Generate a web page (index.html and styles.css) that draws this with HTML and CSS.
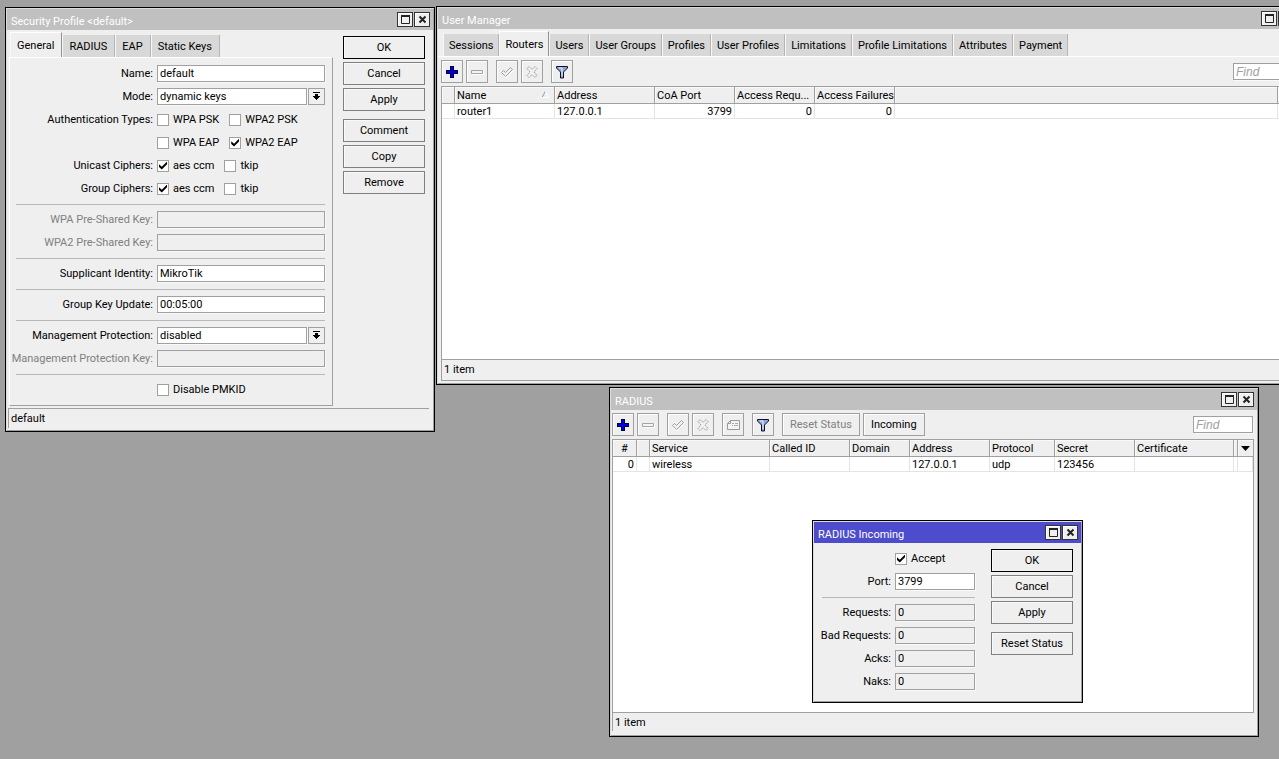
FILE: index.html
```html
<!DOCTYPE html>
<html lang="en">
<head>
<meta charset="utf-8">
<title>WinBox</title>
<link rel="stylesheet" href="styles.css">
</head>
<body>
<svg class="defs" aria-hidden="true">
  <symbol id="i-max" viewBox="0 0 11 11"><path d="M1 1.500h9M1.500 3V9.500H9.500V1" fill="none" stroke="#222"/><path d="M1 1h9v2H1z" fill="#222"/></symbol>
  <symbol id="i-close" viewBox="0 0 11 11"><path d="M2.500 2.500l6 6M8.500 2.500l-6 6" stroke="#222" stroke-width="2" fill="none"/></symbol>
  <symbol id="i-plus" viewBox="0 0 14 14"><path d="M5.500 1.500h3v4h4v3h-4v4h-3v-4h-4v-3h4z" fill="#0000e0" stroke="#000040" shape-rendering="crispEdges"/></symbol>
  <symbol id="i-minus" viewBox="0 0 14 14"><path d="M2 9.500h11.500v-4" stroke="#fff" fill="none"/><path d="M1.500 5.500h11v3h-11z" fill="#f4f4f4" stroke="#a4a4a4"/></symbol>
  <symbol id="i-check" viewBox="0 0 14 14"><path d="M2 9l4 4 8-8" stroke="#fff" fill="none"/><path d="M1.500 7.500l2-2 2 2 5-5 2 2-7 7z" fill="#f2f2f2" stroke="#a0a0a0"/></symbol>
  <symbol id="i-cross" viewBox="0 0 14 14"><path d="M2 3.500l2-2 3 3 3-3 2 2-3 3.500 3 3.500-2 2-3-3-3 3-2-2 3-3.500z" fill="#f2f2f2" stroke="#a0a0a0" stroke-dasharray="2 .6"/></symbol>
  <symbol id="i-card" viewBox="0 0 14 14"><path d="M1.500 5.500l3-3h9v9h-12zM1.500 5.500h3v-3" fill="#f4f4f4" stroke="#999"/><path d="M6 5.500h2M9 5.500h3M6 7.500h1M8 7.500h4" stroke="#aaa"/></symbol>
  <symbol id="i-funnel" viewBox="0 0 14 14"><path d="M1.500 1.500h11v1.500l-4 4v6h-3v-6l-4-4z" fill="#8ea6dc" stroke="#101020"/><path d="M4 3h3v8" stroke="#eef3ff" fill="none"/></symbol>
  <symbol id="i-drop" viewBox="0 0 9 9"><path d="M1 0h7v1H1zM3 2h3v2h2v1H7v1H6v1H5v1H4V7H3V6H2V5H1V4h2z" shape-rendering="crispEdges"/></symbol>
</svg>
<main class="desktop">

<section class="window w-profile">
  <header class="title"><h2>Security Profile &lt;default&gt;</h2>
    <button class="cap" aria-label="Maximize"><svg><use href="#i-max"/></svg></button>
    <button class="cap" aria-label="Close"><svg><use href="#i-close"/></svg></button></header>
  <form class="split">
    <div class="tabbed">
      <nav class="tabs">
        <button type="button" class="tab active">General</button><button type="button" class="tab">RADIUS</button><button type="button" class="tab">EAP</button><button type="button" class="tab">Static Keys</button>
      </nav>
      <div class="panel fields">
        <label for="name">Name:</label><input class="box" id="name" value="default">
        <label for="mode">Mode:</label><div class="combo"><select class="box" id="mode"><option>dynamic keys</option></select><button type="button" class="drop" aria-label="Open mode list"><svg><use href="#i-drop"/></svg></button></div>
        <span class="lbl">Authentication Types:</span><div class="checks"><label><input type="checkbox">WPA PSK</label><label><input type="checkbox">WPA2 PSK</label></div>
        <div class="checks"><label><input type="checkbox">WPA EAP</label><label><input type="checkbox" checked>WPA2 EAP</label></div>
        <span class="lbl">Unicast Ciphers:</span><div class="checks"><label><input type="checkbox" checked>aes ccm</label><label><input type="checkbox">tkip</label></div>
        <span class="lbl">Group Ciphers:</span><div class="checks"><label><input type="checkbox" checked>aes ccm</label><label><input type="checkbox">tkip</label></div>
        <hr>
        <label class="off" for="wpa">WPA Pre-Shared Key:</label><input class="box" id="wpa" disabled>
        <label class="off" for="wpa2">WPA2 Pre-Shared Key:</label><input class="box" id="wpa2" disabled>
        <hr>
        <label for="sup">Supplicant Identity:</label><input class="box" id="sup" value="MikroTik">
        <hr>
        <label for="gku">Group Key Update:</label><input class="box" id="gku" value="00:05:00">
        <hr>
        <label for="mp">Management Protection:</label><div class="combo"><select class="box" id="mp"><option>disabled</option></select><button type="button" class="drop" aria-label="Open protection list"><svg><use href="#i-drop"/></svg></button></div>
        <label class="off" for="mpk">Management Protection Key:</label><input class="box" id="mpk" disabled>
        <hr>
        <div class="checks"><label><input type="checkbox">Disable PMKID</label></div>
      </div>
    </div>
    <div class="actions">
      <button type="button" class="btn primary">OK</button><button type="button" class="btn">Cancel</button><button type="button" class="btn">Apply</button>
      <button type="button" class="btn apart">Comment</button><button type="button" class="btn">Copy</button><button type="button" class="btn">Remove</button>
    </div>
  </form>
  <footer class="status ruled">default</footer>
</section>

<section class="window w-manager">
  <header class="title"><h2>User Manager</h2>
    <button class="cap" aria-label="Maximize"><svg><use href="#i-max"/></svg></button>
    <button class="cap" aria-label="Close"><svg><use href="#i-close"/></svg></button></header>
  <nav class="tabs wide">
    <button class="tab">Sessions</button><button class="tab active">Routers</button><button class="tab">Users</button><button class="tab">User Groups</button><button class="tab">Profiles</button><button class="tab">User Profiles</button><button class="tab">Limitations</button><button class="tab">Profile Limitations</button><button class="tab">Attributes</button><button class="tab">Payment</button>
  </nav>
  <div class="toolbar">
    <button class="tool" aria-label="Add"><svg><use href="#i-plus"/></svg></button>
    <button class="tool" aria-label="Remove"><svg><use href="#i-minus"/></svg></button>
    <button class="tool apart" aria-label="Enable"><svg><use href="#i-check"/></svg></button>
    <button class="tool" aria-label="Disable"><svg><use href="#i-cross"/></svg></button>
    <button class="tool apart" aria-label="Filter"><svg><use href="#i-funnel"/></svg></button>
    <input class="box find" placeholder="Find" aria-label="Find">
  </div>
  <div class="list">
    <table>
      <colgroup><col class="c13"><col class="c100"><col class="c100"><col class="c80"><col class="c80"><col class="c80"><col><col class="c15"></colgroup>
      <thead><tr><th></th><th><span class="sorted">Name<svg viewBox="0 0 7 7"><path d="M0 6.500L3.500 0" stroke="#999" fill="none"/><path d="M3.500 0L6.500 6.500H0" stroke="#fff" fill="none"/></svg></span></th><th>Address</th><th>CoA Port</th><th>Access Requ...</th><th>Access Failures</th><th></th><th></th></tr></thead>
      <tbody><tr><td></td><td>router1</td><td>127.0.0.1</td><td class="num">3799</td><td class="num">0</td><td class="num">0</td><td></td><td></td></tr></tbody>
    </table>
  </div>
  <footer class="status underlined">1 item</footer>
</section>

<section class="window w-radius">
  <header class="title"><h2>RADIUS</h2>
    <button class="cap" aria-label="Maximize"><svg><use href="#i-max"/></svg></button>
    <button class="cap" aria-label="Close"><svg><use href="#i-close"/></svg></button></header>
  <div class="toolbar">
    <button class="tool" aria-label="Add"><svg><use href="#i-plus"/></svg></button>
    <button class="tool" aria-label="Remove"><svg><use href="#i-minus"/></svg></button>
    <button class="tool apart" aria-label="Enable"><svg><use href="#i-check"/></svg></button>
    <button class="tool" aria-label="Disable"><svg><use href="#i-cross"/></svg></button>
    <button class="tool apart" aria-label="Comment"><svg><use href="#i-card"/></svg></button>
    <button class="tool apart" aria-label="Filter"><svg><use href="#i-funnel"/></svg></button>
    <button class="tool text apart" disabled>Reset Status</button>
    <button class="tool text">Incoming</button>
    <input class="box find" placeholder="Find" aria-label="Find">
  </div>
  <div class="list">
    <table>
      <colgroup><col class="c24"><col class="c13"><col class="c120"><col class="c80"><col class="c60"><col class="c80"><col class="c65"><col class="c80"><col><col class="c4"><col class="c15"></colgroup>
      <thead><tr><th class="mid">#</th><th></th><th>Service</th><th>Called ID</th><th>Domain</th><th>Address</th><th>Protocol</th><th>Secret</th><th>Certificate</th><th></th><th class="menu"><svg viewBox="0 0 9 5"><path d="M0 0h9L4.500 5z"/></svg></th></tr></thead>
      <tbody><tr><td class="num">0</td><td></td><td>wireless</td><td></td><td></td><td>127.0.0.1</td><td>udp</td><td>123456</td><td></td><td></td><td></td></tr></tbody>
    </table>
  </div>
  <footer class="status">1 item</footer>
</section>

<section class="window w-incoming focused">
  <header class="title"><h2>RADIUS Incoming</h2>
    <button class="cap" aria-label="Maximize"><svg><use href="#i-max"/></svg></button>
    <button class="cap" aria-label="Close"><svg><use href="#i-close"/></svg></button></header>
  <form class="split">
    <div class="fields counters">
      <div class="checks"><label><input type="checkbox" checked>Accept</label></div>
      <label for="port">Port:</label><input class="box" id="port" value="3799">
      <hr>
      <label for="req">Requests:</label><input class="box ro" id="req" value="0" readonly>
      <label for="bad">Bad Requests:</label><input class="box ro" id="bad" value="0" readonly>
      <label for="ack">Acks:</label><input class="box ro" id="ack" value="0" readonly>
      <label for="nak">Naks:</label><input class="box ro" id="nak" value="0" readonly>
    </div>
    <div class="actions">
      <button type="button" class="btn primary">OK</button><button type="button" class="btn">Cancel</button><button type="button" class="btn">Apply</button>
      <button type="button" class="btn apart">Reset Status</button>
    </div>
  </form>
</section>

</main>
</body>
</html>
```
FILE: styles.css
```css
* { box-sizing: border-box; }
body { margin: 0; font: 11px/15px Roboto, "Liberation Sans", Arial, sans-serif; color: #000; }
button, input, select { font: inherit; color: inherit; margin: 0; padding: 0; border-radius: 0; }
.defs { position: absolute; width: 0; height: 0; }

.desktop { position: relative; min-height: 100vh; overflow: hidden; background: #a0a0a0; }

.window {
  position: absolute; display: flex; flex-direction: column; padding: 1px;
  border: 1px solid #000; background: #efefef;
  box-shadow: inset 1px 1px #dcdcdc, inset -1px -1px #a0a0a0;
}
.w-profile { left: 5px; top: 7px; width: 430px; }
.w-manager { left: 436px; top: 6px; width: 863px; height: 379px; }
.w-radius { left: 609px; top: 387px; width: 650px; height: 350px; }
.w-incoming { left: 812px; top: 520px; width: 271px; height: 183px; }

.title { display: flex; align-items: center; gap: 1px; height: 21px; flex: none; padding: 0 3px 0 4px; background: #c0c0c0; color: #fff; }
.title h2 { flex: 1; margin: 0; padding-top: 3px; font-size: 11px; font-weight: normal; }
.focused .title { background: #4c4ccc; }
.cap { display: flex; align-items: center; justify-content: center; width: 16px; height: 15px; border: 1px solid #333; background: #efefef; box-shadow: inset 1px 1px #fff; }
.cap svg { width: 11px; height: 11px; flex: none; }

.split { display: flex; gap: 10px; padding: 0 8px 0 2px; }
.tabbed { flex: 1; min-width: 0; padding-top: 2px; }
.tabs { display: flex; align-items: flex-end; height: 25px; padding-left: 1px; }
.tabs.wide { height: 28px; flex: none; padding: 0 0 0 5px; border-bottom: 1px solid #fff; }
.tab { height: 22px; padding: 0 7px; border: 0; border-right: 1px solid #b4b4b4; background: #d8d8d8; box-shadow: inset 1px 0 #f8f8f8; white-space: nowrap; }
.wide .tab { padding: 0 5px 0 6px; }
.tab.active { height: 25px; background: #efefef; border-top: 1px solid #fff; border-right-color: #909090; }
.panel { border: 1px solid #fff; border-right-color: #a0a0a0; border-bottom-color: #a0a0a0; padding: 7px 7px 7px 6px; }

.fields { display: grid; grid-template-columns: minmax(0, 1fr) 168px; column-gap: 4px; row-gap: 6px; grid-auto-rows: minmax(2px, auto); flex: 1; }
.fields > label, .lbl { display: flex; justify-content: flex-end; grid-column: 1; line-height: 17px; white-space: nowrap; }
.fields > .box, .combo, .checks { grid-column: 2; }
.fields hr { grid-column: 1 / -1; width: 100%; height: 2px; margin: 0; border: 0; border-bottom: 1px solid #b8b8b8; }
.fields .off { color: #808080; }
.counters { grid-template-columns: minmax(0, 1fr) 80px; align-content: start; padding: 7px 6px 0 6px; }

.box { width: 100%; height: 17px; padding: 0 2px; border: 1px solid #a0a0a0; outline: 0; background: #fff; box-shadow: 1px 1px #fafafa; }
.box:disabled, .box.ro { background: #efefef; }
select.box { appearance: none; min-width: 0; }
.combo { display: flex; gap: 1px; }
.drop { display: flex; align-items: center; justify-content: center; flex: none; width: 17px; height: 17px; border: 1px solid #a0a0a0; background: #efefef; }
.drop svg { width: 9px; height: 9px; }

.checks { display: flex; gap: 10px; height: 17px; }
.checks label { display: flex; align-items: center; gap: 4px; white-space: nowrap; }
.checks input { appearance: none; display: grid; place-items: center; width: 12px; height: 12px; border: 1px solid #a0a0a0; background: #fff; }
.checks input:checked::before { content: ""; width: 8px; height: 8px; background: #000; clip-path: polygon(0 35%, 35% 65%, 100% 0, 100% 35%, 35% 100%, 0 70%); }

.actions { display: flex; flex-direction: column; flex: none; gap: 3px; width: 82px; padding-top: 6px; }
.btn { height: 23px; border: 1px solid #808080; background: #efefef; box-shadow: inset 1px 1px #fafafa; }
.btn.primary { border-color: #000; }
.btn.apart { margin-top: 5px; }

.status { flex: none; height: 18px; margin: 0 4px 4px 1px; padding: 2px; border-left: 1px solid #a0a0a0; }
.ruled { height: 20px; margin-top: 2px; margin-bottom: 2px; border-top: 1px solid #a0a0a0; }
.underlined { height: 21px; margin: 0 4px 2px 3px; border-bottom: 1px solid #a0a0a0; }

.toolbar { display: flex; align-items: center; gap: 3px; flex: none; height: 29px; padding: 0 4px 0 1px; }
.w-manager .toolbar { padding-left: 3px; }
.tool { display: flex; align-items: center; justify-content: center; width: 22px; height: 23px; border: 1px solid #a0a0a0; background: #efefef; box-shadow: inset 1px 1px #fff; white-space: nowrap; }
.tool svg { width: 14px; height: 14px; flex: none; }
.tool.apart { margin-left: 5px; }
.tool.text { width: auto; padding: 0 7px; }
.tool:disabled { color: #808080; }
.find { width: 60px; margin-left: auto; font-family: "Liberation Sans", Arial, sans-serif; font-size: 12px; }
.find::placeholder { color: #a0a0a0; font-style: italic; }

.list { flex: 1; min-height: 0; margin: 0 3px 0 1px; border: 1px solid #a0a0a0; background: #fff; }
.w-manager .list { margin-left: 3px; }
table { width: 100%; table-layout: fixed; border-collapse: separate; border-spacing: 0; }
th, td { padding: 0 2px; overflow: hidden; text-align: left; font-weight: normal; white-space: nowrap; }
th { height: 17px; padding-top: 1px; background: #efefef; border-right: 1px solid #a0a0a0; border-bottom: 1px solid #a0a0a0; box-shadow: inset 1px 1px #fafafa; }
td { height: 15px; padding-top: 2px; line-height: 12px; border-right: 1px solid #e4e4e4; border-bottom: 1px solid #e4e4e4; }
th:last-child { border-right: 0; }
.num { text-align: right; }
.mid { text-align: center; }
.menu { padding: 0 3px; }
.menu svg { display: block; width: 9px; height: 5px; }
.sorted { display: flex; justify-content: space-between; padding-right: 3px; }
.sorted svg { width: 7px; height: 7px; margin-top: 3px; }
.c4 { width: 4px; } .c13 { width: 13px; } .c15 { width: 15px; } .c24 { width: 24px; }
.c60 { width: 60px; } .c65 { width: 65px; } .c80 { width: 80px; }
.c100 { width: 100px; } .c120 { width: 120px; }
```
